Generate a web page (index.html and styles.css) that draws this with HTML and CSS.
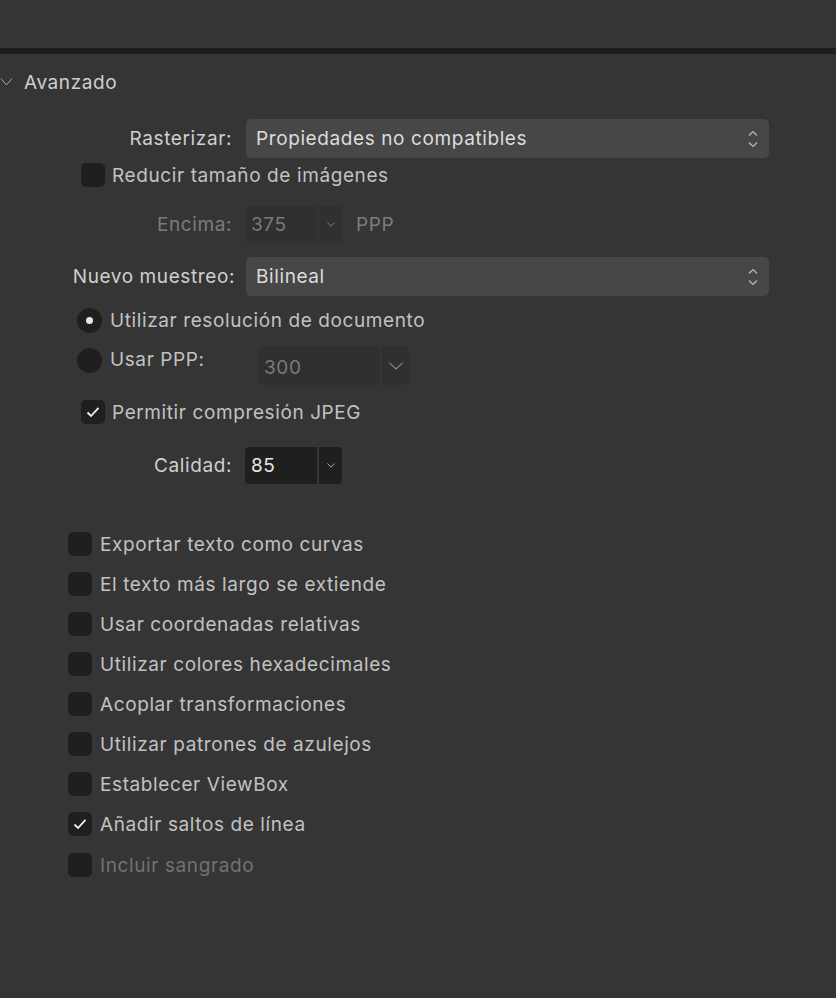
FILE: index.html
```html
<!DOCTYPE html>
<html lang="es">
<head>
<meta charset="utf-8">
<link rel="stylesheet" href="styles.css">
</head>
<body>
<div class="topbar"></div>
<div class="divider"></div>
<div class="section-head">
  <svg class="disclosure" width="13" height="10" viewBox="0 0 13 10"><path d="M1 1.5 L6.5 8 L12 1.5" fill="none" stroke="#a8a8a8" stroke-width="1"/></svg>
  <span class="section-title">Avanzado</span>
</div>

<div class="row row-raster">
  <label class="lbl">Rasterizar:</label>
  <div class="popup">
    <span>Propiedades no compatibles</span>
    <svg class="updown" width="10" height="18" viewBox="0 0 10 18"><path d="M1 5.5 L5 1.5 L9 5.5 M1 12.5 L5 16.5 L9 12.5" fill="none" stroke="#bdbdbd" stroke-width="1.1"/></svg>
  </div>
</div>

<div class="check-row indent1 row-reduce">
  <span class="box"></span>
  <span class="ctext">Reducir tamaño de imágenes</span>
</div>

<div class="row row-encima">
  <label class="lbl dim">Encima:</label>
  <div class="combo disabled">
    <span class="combo-field">375</span>
    <span class="combo-btn"><svg width="8" height="5" viewBox="0 0 8 5"><path d="M0.5 0.5 L4 4.2 L7.5 0.5" fill="none" stroke="#7a7a7a" stroke-width="1"/></svg></span>
  </div>
  <span class="unit dim">PPP</span>
</div>

<div class="row row-resample">
  <label class="lbl">Nuevo muestreo:</label>
  <div class="popup">
    <span>Bilineal</span>
    <svg class="updown" width="10" height="18" viewBox="0 0 10 18"><path d="M1 5.5 L5 1.5 L9 5.5 M1 12.5 L5 16.5 L9 12.5" fill="none" stroke="#bdbdbd" stroke-width="1.1"/></svg>
  </div>
</div>

<div class="check-row radio-row row-radio1">
  <span class="radio on"></span>
  <span class="ctext">Utilizar resolución de documento</span>
</div>

<div class="check-row radio-row row-radio2">
  <span class="radio"></span>
  <span class="ctext radio-lbl">Usar PPP:</span>
  <div class="combo big disabled">
    <span class="combo-field">300</span>
    <span class="combo-btn"><svg width="14" height="8" viewBox="0 0 14 8"><path d="M0.5 0.8 L7 7 L13.5 0.8" fill="none" stroke="#8a8a8a" stroke-width="1.1"/></svg></span>
  </div>
</div>

<div class="check-row indent1 row-jpeg">
  <span class="box checked"><svg width="14" height="12" viewBox="0 0 14 12"><path d="M1.5 6.5 L5 10 L12.5 1.8" fill="none" stroke="#f0f0f0" stroke-width="1.8"/></svg></span>
  <span class="ctext">Permitir compresión JPEG</span>
</div>

<div class="row row-quality">
  <label class="lbl">Calidad:</label>
  <div class="combo active">
    <span class="combo-field">85</span>
    <span class="combo-btn"><svg width="8" height="5" viewBox="0 0 8 5"><path d="M0.5 0.5 L4 4.2 L7.5 0.5" fill="none" stroke="#a8a8a8" stroke-width="1"/></svg></span>
  </div>
</div>

<ul class="options">
  <li class="check-row"><span class="box"></span><span class="ctext">Exportar texto como curvas</span></li>
  <li class="check-row"><span class="box"></span><span class="ctext">El texto más largo se extiende</span></li>
  <li class="check-row"><span class="box"></span><span class="ctext">Usar coordenadas relativas</span></li>
  <li class="check-row"><span class="box"></span><span class="ctext">Utilizar colores hexadecimales</span></li>
  <li class="check-row"><span class="box"></span><span class="ctext">Acoplar transformaciones</span></li>
  <li class="check-row"><span class="box"></span><span class="ctext">Utilizar patrones de azulejos</span></li>
  <li class="check-row"><span class="box"></span><span class="ctext">Establecer ViewBox</span></li>
  <li class="check-row"><span class="box checked"><svg width="14" height="12" viewBox="0 0 14 12"><path d="M1.5 6.5 L5 10 L12.5 1.8" fill="none" stroke="#f0f0f0" stroke-width="1.8"/></svg></span><span class="ctext">Añadir saltos de línea</span></li>
  <li class="check-row disabled-row"><span class="box"></span><span class="ctext">Incluir sangrado</span></li>
</ul>
</body>
</html>
```

FILE: styles.css
```css
* { box-sizing: border-box; }
html, body {
  margin: 0;
  padding: 0;
  background: #353535;
  font-family: Inter, "Open Sans", "Liberation Sans", sans-serif;
  font-size: 19px;
  letter-spacing: 0.6px;
  color: #c9c9c9;
  height: 100%;
}
.topbar { height: 48px; background: #353535; }
.divider { height: 6px; background: #1d1d1d; }

.section-head {
  display: flex;
  align-items: center;
  height: 56px;
}
.disclosure { margin-left: 0; margin-right: 11px; }
.section-title { color: #cfcfcf; }

.row {
  display: flex;
  align-items: center;
}
.lbl {
  width: 235px;
  text-align: right;
  padding-right: 3px;
  color: #cfcfcf;
  flex: none;
  white-space: nowrap;
}
.dim { color: #7c7c7c; }

.popup {
  margin-left: 11px;
  width: 523px;
  height: 39px;
  background: #474747;
  border-radius: 5px;
  display: flex;
  align-items: center;
  justify-content: space-between;
  padding: 0 11px 0 10px;
  color: #dcdcdc;
}

.row-raster { margin-top: 9px; }

.check-row {
  display: flex;
  align-items: center;
  height: 24px;
}
.box {
  width: 24px;
  height: 24px;
  border-radius: 5px;
  background: #1f1f1f;
  flex: none;
  display: flex;
  align-items: center;
  justify-content: center;
}
.ctext { margin-left: 7px; color: #c2c2c2; white-space: nowrap; }
.indent1 { margin-left: 81px; }
.row-reduce { margin-top: 5px; }

.combo {
  margin-left: 10px;
  display: flex;
  height: 37px;
  flex: none;
}
.combo-field {
  width: 72px;
  height: 100%;
  display: flex;
  align-items: center;
  padding-left: 6px;
  border-radius: 4px 0 0 4px;
}
.combo-btn {
  width: 23px;
  margin-left: 2px;
  height: 100%;
  display: flex;
  align-items: center;
  justify-content: center;
  border-radius: 0 4px 4px 0;
}
.combo.disabled .combo-field,
.combo.disabled .combo-btn { background: #303030; color: #7a7a7a; }
.combo.active .combo-field,
.combo.active .combo-btn { background: #1f1f1f; color: #e6e6e6; }
.unit { margin-left: 14px; }

.row-encima { margin-top: 19px; }
.row-resample { margin-top: 14px; }
.row-resample .lbl { padding-right: 0; }

.radio-row { margin-left: 77px; }
.radio {
  width: 25px;
  height: 25px;
  border-radius: 50%;
  background: #1f1f1f;
  flex: none;
  display: flex;
  align-items: center;
  justify-content: center;
}
.radio.on::after {
  content: "";
  width: 7px;
  height: 7px;
  border-radius: 50%;
  background: #e6e6e6;
}
.radio-row .ctext { margin-left: 8px; }
.row-radio1 { margin-top: 12px; }
.row-radio2 { margin-top: 14px; height: 39px; align-items: flex-start; }
.row-radio2 .radio { margin-top: 2px; }
.row-radio2 .ctext { line-height: 27px; }
.radio-lbl { width: 149px; }
.combo.big { height: 39px; margin-left: 0; }
.combo.big .combo-field { width: 121px; padding-left: 5px; padding-top: 3px; }
.combo.big .combo-btn { width: 27px; }

.row-jpeg { margin-top: 15px; }
.row-quality { margin-top: 23px; }

.options {
  list-style: none;
  margin: 48px 0 0 68px;
  padding: 0;
}
.options .check-row { margin-bottom: 16px; }
.options .check-row .ctext { margin-left: 8px; }
.disabled-row .ctext { color: #727272; }
.options .disabled-row { margin-top: 17px; }
```
